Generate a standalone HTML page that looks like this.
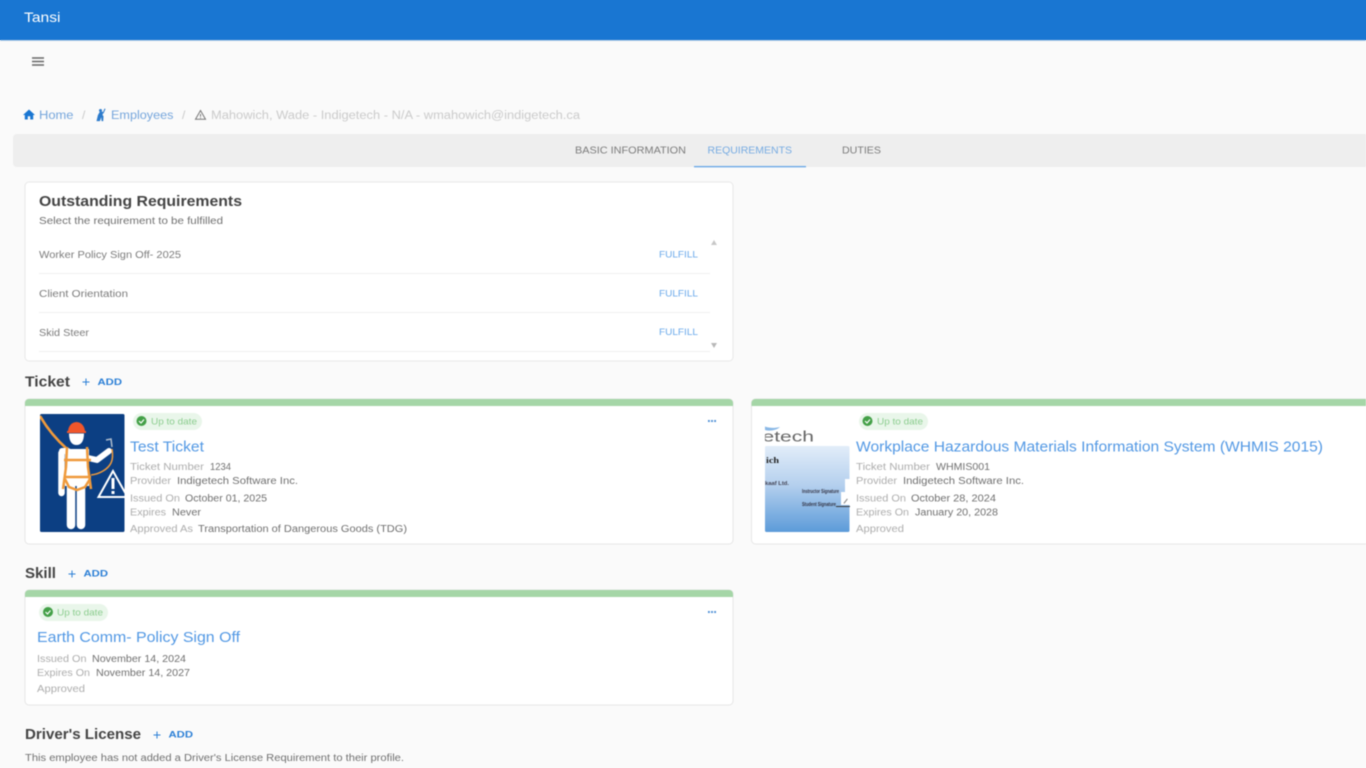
<!DOCTYPE html>
<html lang="en">
<head>
<meta charset="utf-8">
<title>Tansi</title>
<style>
html,body{margin:0;padding:0;width:1366px;height:768px;overflow:hidden;background:linear-gradient(#1976d2 40px,#fafafa 40px)}
svg{display:block;filter:blur(.45px)}
text{font-family:"Liberation Sans",sans-serif}
.l{font-size:10px;fill:#adadad}
.v{font-size:10px;fill:#707070}
.h{font-size:14.500px;font-weight:bold;fill:#444}
.add{font-size:9.500px;font-weight:bold;fill:#2b7fd6}
.t{font-size:15px;fill:#5298e4}
.chip{font-size:9.500px;fill:#8ccd8f}
.ff{font-size:9.500px;fill:#6aa9ea}
.tab{font-size:10px;fill:#7c7c7c}
.row{font-size:10px;fill:#7c7c7c}
</style>
</head>
<body>
<svg width="1366" height="768" viewBox="0 0 1366 768" xmlns="http://www.w3.org/2000/svg">
<defs>
<linearGradient id="g" x1="0" y1="0" x2="0" y2="1"><stop offset="0" stop-color="#e2edf9"/><stop offset=".45" stop-color="#b5d0ee"/><stop offset="1" stop-color="#5c9bd9"/></linearGradient>
<clipPath id="c1"><rect x="40" y="414" width="84.500" height="118" rx="1.500"/></clipPath>
<clipPath id="c2"><rect x="765" y="420" width="60" height="26"/></clipPath>
</defs>
<rect y="40" width="1366" height="728" fill="#fafafa"/>
<rect width="1366" height="40" fill="#1976d2"/>
<rect y="40" width="1366" height="1" fill="#b9cfe6"/>
<text x="24" y="22" font-size="14" fill="#fff" textLength="36.500" lengthAdjust="spacingAndGlyphs">Tansi</text>
<path d="M32 58h12M32 61.500h12M32 65h12" stroke="#666" stroke-width="1.500"/>

<path d="M29 109.500l-6 5.500h1.800v4.500h3v-3.300h2.400v3.300h3V115H35z" fill="#1976d2"/>
<text x="39" y="119" font-size="11.500" fill="#76a6dc" textLength="34.500" lengthAdjust="spacingAndGlyphs">Home</text>
<text x="82" y="119" font-size="12" fill="#c9c9c9">/</text>
<path d="M101.500 111.500l1.800.600-.8 3 1 1-.3 5h-1.600l-.4-4-1.300 4h-3.400l1.400-6 1.700-3zM104.500 108.500l1 .5-2 4.500-.8-.5z" fill="#2c7bcc"/>
<circle cx="100.500" cy="110.500" r="1.500" fill="#2c7bcc"/>
<text x="111" y="119" font-size="11.500" fill="#76a6dc" textLength="62.500" lengthAdjust="spacingAndGlyphs">Employees</text>
<text x="182" y="119" font-size="12" fill="#c9c9c9">/</text>
<path d="M200.500 110.500l5 8.800h-10z" fill="none" stroke="#777" stroke-width="1"/>
<path d="M200.500 114v2.800M200.500 117.500v.8" stroke="#777" stroke-width="1"/>
<text x="211" y="119" font-size="11.500" fill="#cbcbcb" textLength="369" lengthAdjust="spacingAndGlyphs">Mahowich, Wade - Indigetech - N/A - wmahowich@indigetech.ca</text>

<rect x="13" y="134" width="1370" height="33" rx="4" fill="#eeeeee"/>
<text class="tab" x="575" y="153.500" textLength="111" lengthAdjust="spacingAndGlyphs">BASIC INFORMATION</text>
<text class="tab" x="707.500" y="153.500" style="fill:#76abe2" textLength="84.500" lengthAdjust="spacingAndGlyphs">REQUIREMENTS</text>
<text class="tab" x="842" y="153.500" textLength="39" lengthAdjust="spacingAndGlyphs">DUTIES</text>
<rect x="694" y="166" width="112" height="1.300" fill="#64a5e6"/>

<rect x="25" y="182" width="708" height="179" rx="4" fill="#fff" stroke="#e8e8e8"/>
<text x="39" y="206" font-size="14.500" font-weight="bold" fill="#444" textLength="203" lengthAdjust="spacingAndGlyphs">Outstanding Requirements</text>
<text x="39" y="224" font-size="10" fill="#707070" textLength="184" lengthAdjust="spacingAndGlyphs">Select the requirement to be fulfilled</text>
<text class="row" x="39" y="258" textLength="142" lengthAdjust="spacingAndGlyphs">Worker Policy Sign Off- 2025</text>
<text class="row" x="39" y="297" textLength="89" lengthAdjust="spacingAndGlyphs">Client Orientation</text>
<text class="row" x="39" y="336" textLength="50" lengthAdjust="spacingAndGlyphs">Skid Steer</text>
<path d="M39 273.500h671M39 312.500h671M39 351.500h671" stroke="#efefef" stroke-width="1"/>
<text class="ff" x="659" y="257.500" textLength="39" lengthAdjust="spacingAndGlyphs">FULFILL</text>
<text class="ff" x="659" y="296.500" textLength="39" lengthAdjust="spacingAndGlyphs">FULFILL</text>
<text class="ff" x="659" y="335" textLength="39" lengthAdjust="spacingAndGlyphs">FULFILL</text>
<path d="M711 245l3-5 3 5z" fill="#c8c8c8"/>
<path d="M711 343l3 5 3-5z" fill="#b8b8b8"/>

<text class="h" x="25" y="386.500" textLength="45" lengthAdjust="spacingAndGlyphs">Ticket</text>
<path d="M82.500 382h7M86 378.500v7" stroke="#2b7fd6" stroke-width="1"/>
<text class="add" x="97.500" y="385" textLength="24.500" lengthAdjust="spacingAndGlyphs">ADD</text>

<rect x="25" y="399" width="708" height="145" rx="4" fill="#fff" stroke="#e6e6e6"/>
<path d="M25 406v-3a4 4 0 0 1 4-4h700a4 4 0 0 1 4 4v3z" fill="#a5d6a7"/>
<g clip-path="url(#c1)">
<rect x="40" y="414" width="84.500" height="118" fill="#0c3f83"/>
<path d="M40 416c8 14 17 24 27 33" fill="none" stroke="#ef9a3c" stroke-width="2.600"/>
<path d="M68 432a8.500 10 0 0 1 17 0z" fill="#f0562b"/>
<rect x="67" y="431" width="19" height="2" fill="#f0562b"/>
<path d="M69 433.500h15c0 8-3 11.500-7.500 11.500S69 441.500 69 433.500z" fill="#fff"/>
<path d="M65 449h24v37H65z" fill="#fff"/>
<path d="M61.500 453v40" stroke="#fff" stroke-width="6.500" stroke-linecap="round"/>
<path d="M62 451h6" stroke="#fff" stroke-width="6" stroke-linecap="round"/>
<path d="M88 458l9 2 12-9" fill="none" stroke="#fff" stroke-width="6" stroke-linecap="round" stroke-linejoin="round"/>
<path d="M71 484v41M81 484v41" stroke="#fff" stroke-width="8.500" stroke-linecap="round"/>
<path d="M67 447l-1 20-3 22M87 447l1 20 3 22M64 460h27M64 477h27M65 479l4 8 8 3 8-3 5-8" fill="none" stroke="#ef9a3c" stroke-width="2.500"/>
<path d="M91 475c9-1 17-6 20-12 2-4 2-8 1-14" fill="none" stroke="#ef9a3c" stroke-width="1.500"/>
<path d="M106 440l5-1 1 8" fill="none" stroke="#aebccd" stroke-width="1.500"/>
<path d="M113 471l-14.500 26h29z" fill="#0c3f83" stroke="#fff" stroke-width="2"/>
<path d="M113 478v11M113 491v3" stroke="#fff" stroke-width="3"/>
</g>
<rect x="133" y="413" width="69" height="17" rx="8.500" fill="#e9f6ea"/>
<circle cx="141.500" cy="421" r="5" fill="#43a047"/>
<path d="M139 421l2 2 3-3.500" fill="none" stroke="#fff" stroke-width="1.200"/>
<text class="chip" x="151" y="424.500" textLength="46" lengthAdjust="spacingAndGlyphs">Up to date</text>
<text class="t" x="130" y="451.500" textLength="74" lengthAdjust="spacingAndGlyphs">Test Ticket</text>
<text class="l" x="130" y="470" textLength="74" lengthAdjust="spacingAndGlyphs">Ticket Number</text>
<text class="v" x="210" y="470" style="font-size:10.500px" textLength="21" lengthAdjust="spacingAndGlyphs">1234</text>
<text class="l" x="130" y="484" textLength="41" lengthAdjust="spacingAndGlyphs">Provider</text>
<text class="v" x="177" y="484" textLength="121" lengthAdjust="spacingAndGlyphs">Indigetech Software Inc.</text>
<text class="l" x="130" y="501.500" textLength="50" lengthAdjust="spacingAndGlyphs">Issued On</text>
<text class="v" x="185" y="501.500" textLength="82" lengthAdjust="spacingAndGlyphs">October 01, 2025</text>
<text class="l" x="130" y="515.500" textLength="36" lengthAdjust="spacingAndGlyphs">Expires</text>
<text class="v" x="172" y="515.500" textLength="29" lengthAdjust="spacingAndGlyphs">Never</text>
<text class="l" x="130" y="532" textLength="63" lengthAdjust="spacingAndGlyphs">Approved As</text>
<text class="v" x="198" y="532" textLength="209" lengthAdjust="spacingAndGlyphs">Transportation of Dangerous Goods (TDG)</text>
<path d="M708 421h1.800M711.100 421h1.800M714.200 421h1.800" stroke="#4d8fd6" stroke-width="2"/>

<rect x="751.500" y="399" width="630" height="145" rx="4" fill="#fff" stroke="#e6e6e6"/>
<path d="M751.500 406v-3a4 4 0 0 1 4-4h620v7z" fill="#a5d6a7"/>
<path d="M765 426.500c4 1.500 9 2 15 .5-3 3-10 4.500-15 3z" fill="#8ab8e6"/>
<g clip-path="url(#c2)"><text x="762.500" y="441.500" font-size="14.500" fill="#666" textLength="51.500" lengthAdjust="spacingAndGlyphs">etech</text></g>
<rect x="765" y="446" width="84.500" height="86" rx="1.500" fill="url(#g)"/>
<text x="766" y="463" font-size="8" font-weight="bold" style="font-family:'Liberation Serif',serif" fill="#222" textLength="13" lengthAdjust="spacingAndGlyphs">ich</text>
<text x="765" y="485" font-size="5" font-weight="bold" fill="#445" textLength="24" lengthAdjust="spacingAndGlyphs">kaaf Ltd.</text>
<text x="802" y="493" font-size="5" font-weight="bold" fill="#334" textLength="37" lengthAdjust="spacingAndGlyphs">Instructor Signature</text>
<text x="802" y="506" font-size="5" font-weight="bold" fill="#334" textLength="34" lengthAdjust="spacingAndGlyphs">Student Signature</text>
<rect x="845" y="479" width="5" height="14" fill="#fff"/>
<rect x="841" y="492" width="9" height="13" fill="#fff"/>
<path d="M843.500 503l3.500-4.500.8.8-3.500 4.500z" fill="#888"/>
<rect x="836" y="506" width="14" height="1" fill="#333"/>
<rect x="859" y="413" width="69" height="17" rx="8.500" fill="#e9f6ea"/>
<circle cx="867.500" cy="421" r="5" fill="#43a047"/>
<path d="M865 421l2 2 3-3.500" fill="none" stroke="#fff" stroke-width="1.200"/>
<text class="chip" x="877" y="424.500" textLength="46" lengthAdjust="spacingAndGlyphs">Up to date</text>
<text class="t" x="856" y="451.500" textLength="467" lengthAdjust="spacingAndGlyphs">Workplace Hazardous Materials Information System (WHMIS 2015)</text>
<text class="l" x="856" y="470" textLength="74" lengthAdjust="spacingAndGlyphs">Ticket Number</text>
<text class="v" x="936" y="470" textLength="54" lengthAdjust="spacingAndGlyphs">WHMIS001</text>
<text class="l" x="856" y="484" textLength="41" lengthAdjust="spacingAndGlyphs">Provider</text>
<text class="v" x="903" y="484" textLength="121" lengthAdjust="spacingAndGlyphs">Indigetech Software Inc.</text>
<text class="l" x="856" y="501.500" textLength="50" lengthAdjust="spacingAndGlyphs">Issued On</text>
<text class="v" x="911" y="501.500" textLength="85" lengthAdjust="spacingAndGlyphs">October 28, 2024</text>
<text class="l" x="856" y="515.500" textLength="53" lengthAdjust="spacingAndGlyphs">Expires On</text>
<text class="v" x="915" y="515.500" textLength="83" lengthAdjust="spacingAndGlyphs">January 20, 2028</text>
<text class="l" x="856" y="532" textLength="48" lengthAdjust="spacingAndGlyphs">Approved</text>

<text class="h" x="25" y="578" textLength="31" lengthAdjust="spacingAndGlyphs">Skill</text>
<path d="M68.500 574h7M72 570.500v7" stroke="#2b7fd6" stroke-width="1"/>
<text class="add" x="83.500" y="576.500" textLength="24.500" lengthAdjust="spacingAndGlyphs">ADD</text>

<rect x="25" y="590" width="708" height="115" rx="4" fill="#fff" stroke="#e6e6e6"/>
<path d="M25 597v-3a4 4 0 0 1 4-4h700a4 4 0 0 1 4 4v3z" fill="#a5d6a7"/>
<rect x="39" y="604" width="69" height="17" rx="8.500" fill="#e9f6ea"/>
<circle cx="48" cy="612" r="5" fill="#43a047"/>
<path d="M45.500 612l2 2 3-3.500" fill="none" stroke="#fff" stroke-width="1.200"/>
<text class="chip" x="57" y="615.500" textLength="46" lengthAdjust="spacingAndGlyphs">Up to date</text>
<text class="t" x="37" y="642" textLength="203" lengthAdjust="spacingAndGlyphs">Earth Comm- Policy Sign Off</text>
<text class="l" x="37" y="662" textLength="49.500" lengthAdjust="spacingAndGlyphs">Issued On</text>
<text class="v" x="92" y="662" textLength="94" lengthAdjust="spacingAndGlyphs">November 14, 2024</text>
<text class="l" x="37" y="676" textLength="53" lengthAdjust="spacingAndGlyphs">Expires On</text>
<text class="v" x="96" y="676" textLength="94" lengthAdjust="spacingAndGlyphs">November 14, 2027</text>
<text class="l" x="37" y="692" textLength="48" lengthAdjust="spacingAndGlyphs">Approved</text>
<path d="M708 612h1.800M711.100 612h1.800M714.200 612h1.800" stroke="#4d8fd6" stroke-width="2"/>

<text class="h" x="25" y="739" textLength="116" lengthAdjust="spacingAndGlyphs">Driver's License</text>
<path d="M153.500 735h7M157 731.500v7" stroke="#2b7fd6" stroke-width="1"/>
<text class="add" x="168.500" y="737.500" textLength="24.500" lengthAdjust="spacingAndGlyphs">ADD</text>
<text x="25" y="761" font-size="10" fill="#707070" textLength="379" lengthAdjust="spacingAndGlyphs">This employee has not added a Driver's License Requirement to their profile.</text>
</svg>
</body>
</html>
